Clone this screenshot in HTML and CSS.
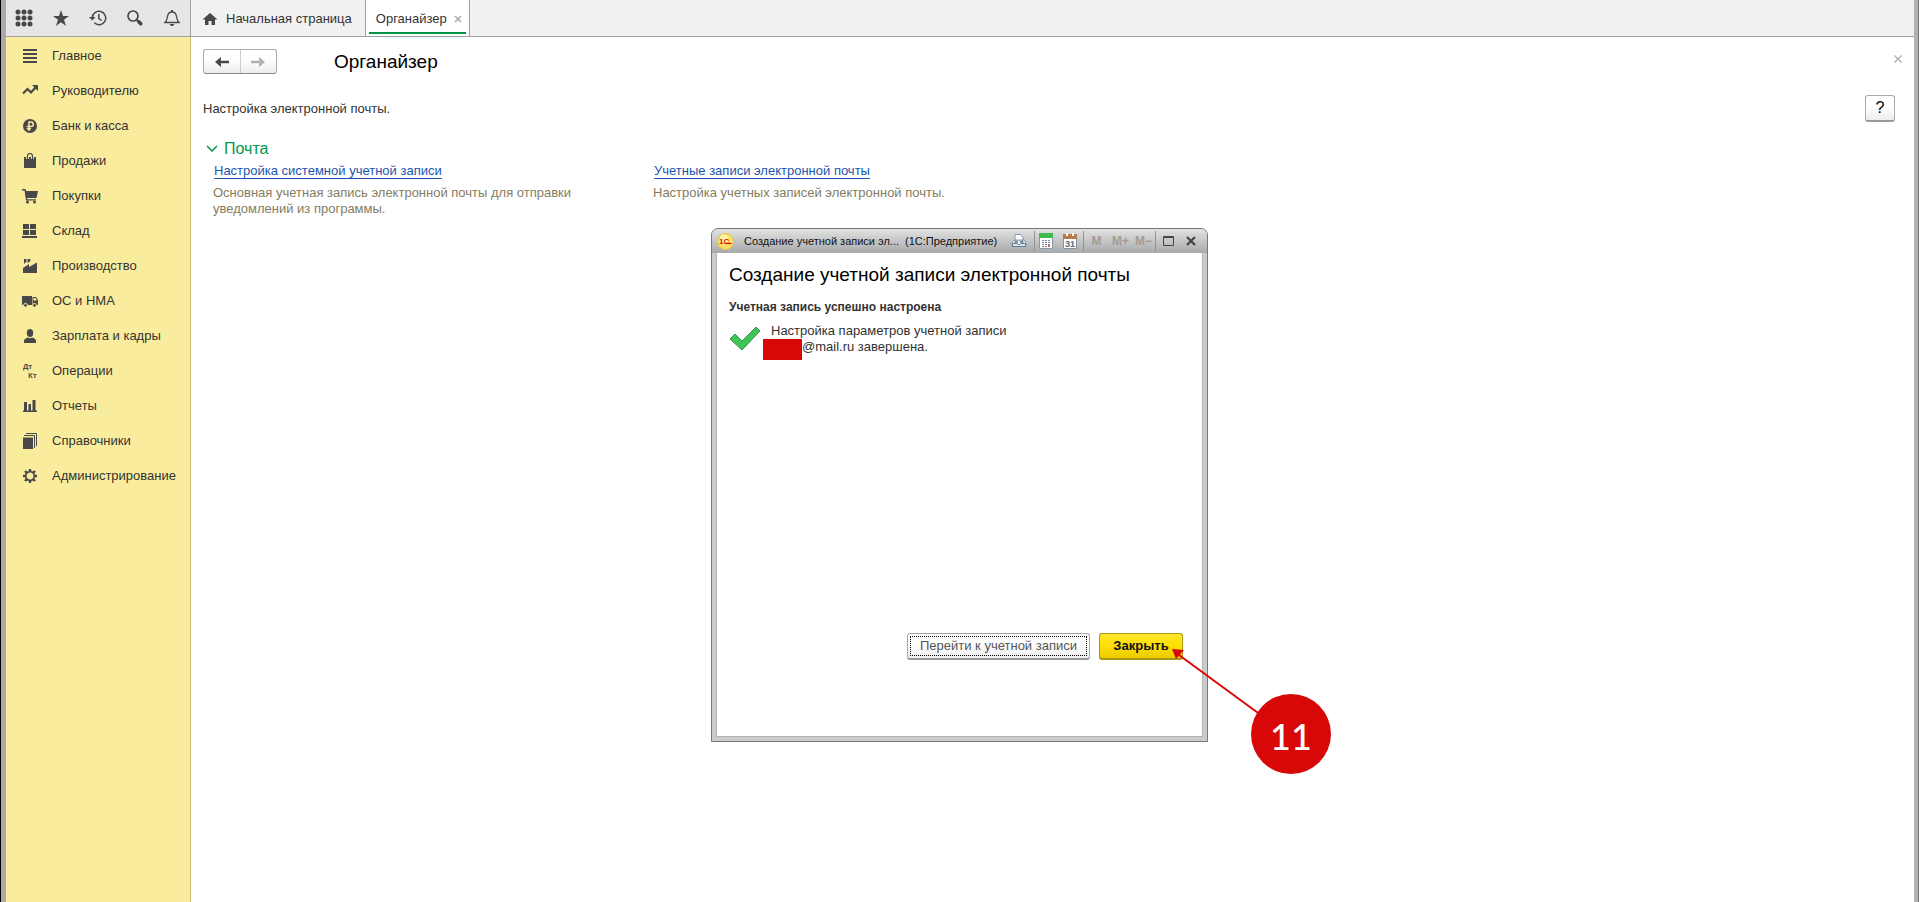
FILE: index.html
```html
<!DOCTYPE html>
<html lang="ru">
<head>
<meta charset="utf-8">
<title>Органайзер</title>
<link rel="stylesheet" href="styles.css">
</head>
<body>
<div class="app">
  <header class="topbar">
    <div class="tools">
      <button class="tool" aria-label="Меню"><svg width="18" height="18" viewBox="0 0 18 18"><g fill="#484848"><circle cx="3" cy="3" r="2.5"/><circle cx="9" cy="3" r="2.5"/><circle cx="15" cy="3" r="2.5"/><circle cx="3" cy="9" r="2.5"/><circle cx="9" cy="9" r="2.5"/><circle cx="15" cy="9" r="2.5"/><circle cx="3" cy="15" r="2.5"/><circle cx="9" cy="15" r="2.5"/><circle cx="15" cy="15" r="2.5"/></g></svg></button>
      <button class="tool" aria-label="Избранное"><svg width="18" height="18" viewBox="0 0 18 18"><path fill="#484848" d="M9 1l2 6h6l-5 3.800 2 6.200-5-3.800-5 3.800 2-6.200-5-3.800h6z"/></svg></button>
      <button class="tool" aria-label="История"><svg width="18" height="18" viewBox="0 0 18 18"><path fill="none" stroke="#484848" stroke-width="1.500" d="M3.300 9a6.700 6.700 0 1 1 2 4.800M9.800 5v4.500l3 2"/><path fill="#484848" d="M0 8h6.500L3.300 11.500z"/></svg></button>
      <button class="tool" aria-label="Поиск"><svg width="18" height="18" viewBox="0 0 18 18"><circle cx="7" cy="7" r="5" fill="none" stroke="#484848" stroke-width="1.700"/><path d="M10.500 10.500l2 2" stroke="#484848" stroke-width="2"/><path d="M12.800 12.800l2 2" stroke="#484848" stroke-width="3.600" stroke-linecap="round"/></svg></button>
      <button class="tool" aria-label="Уведомления"><svg width="18" height="18" viewBox="0 0 18 18"><path fill="none" stroke="#484848" stroke-width="1.300" d="M2 13.500h14c-2.500-2.500-2-4.500-2.700-7C12.700 4 11 3 9 3S5.300 4 4.700 6.500C4 9 4.500 11 2 13.500z"/><path fill="#484848" d="M8 1h2v2H8zM6.500 15h5L10 17H8z"/></svg></button>
    </div>
    <nav class="tabs">
      <a class="tab" href="#home"><svg width="16" height="14" viewBox="0 0 16 14"><path fill="#484848" d="M8 1l7.500 6.500H13V13H9.500V9h-3v4H3V7.500H.5z"/></svg><span>Начальная страница</span></a>
      <div class="tab tab-active"><a href="#organizer">Органайзер</a><button class="tab-close" aria-label="Закрыть вкладку"><svg width="8" height="8" viewBox="0 0 8 8"><path d="M1 1l6 6M7 1L1 7" stroke="#aaa" stroke-width="1.500"/></svg></button></div>
    </nav>
  </header>
  <nav class="sidebar">
    <a href="#"><svg viewBox="0 0 16 16"><path d="M1 2h14M1 6h14M1 10h14M1 14h14" stroke="#484848" stroke-width="2"/></svg>Главное</a>
    <a href="#"><svg viewBox="0 0 16 16"><path fill="none" stroke="#484848" stroke-width="2.200" d="M1 10.500l4.500-4.500L9 9.500l4.500-5"/><path fill="#484848" d="M10 2h6v6z"/></svg>Руководителю</a>
    <a href="#"><svg viewBox="0 0 16 16"><circle cx="8" cy="8" r="7" fill="#484848"/><path fill="none" stroke="#faec9d" stroke-width="1.500" d="M7 13V4h2a2.200 2.200 0 0 1 0 4.600H4.700M4.700 10.700H9"/></svg>Банк и касса</a>
    <a href="#"><svg viewBox="0 0 16 16"><path fill="#484848" d="M2 4h12v11H2z"/><path fill="none" stroke="#faec9d" stroke-width="3" d="M5.500 6V3.500a2.500 2.500 0 0 1 5 0V6"/><path fill="none" stroke="#484848" stroke-width="1.200" d="M5.500 6V3a2.500 2.500 0 0 1 5 0v3"/></svg>Продажи</a>
    <a href="#"><svg viewBox="0 0 16 16"><path fill="#484848" d="M0 1h3.500l.7 2H16l-1.500 7H5l.3 1.300H14V12.500H4L2.500 2.500H0z"/><circle cx="5.500" cy="14" r="1.500" fill="#484848"/><circle cx="12.500" cy="14" r="1.500" fill="#484848"/></svg>Покупки</a>
    <a href="#"><svg viewBox="0 0 16 16"><path fill="#484848" d="M1 1h6v5H1zM8 1h6v5H8zM1 7h6v5H1zM8 7h6v5H8zM0 13h15v2H0z"/></svg>Склад</a>
    <a href="#"><svg viewBox="0 0 16 16"><path fill="#484848" d="M1 15V10l6-4v3l8-4.500V15zM2 1h2.500v2.500L2 6zM5.500 1H8.500L8 3.500 5.500 5z"/></svg>Производство</a>
    <a href="#"><svg viewBox="0 0 16 16"><path fill="#484848" d="M0 3h10v9H0zM10.500 4H14l2 3v5h-5.500z"/><path fill="#faec9d" d="M11.500 5h2l1.500 2.500h-3.500z"/><g fill="#484848" stroke="#faec9d"><circle cx="3.500" cy="12.300" r="1.900"/><circle cx="12.500" cy="12.300" r="1.900"/></g></svg>ОС и НМА</a>
    <a href="#"><svg viewBox="0 0 16 16"><ellipse cx="8" cy="5" rx="3.200" ry="4" fill="#484848"/><path fill="#484848" d="M2 15v-2c0-2 2-3 4-3.500 1 1 3 1 4 0 2 .5 4 1.500 4 3.500v2z"/></svg>Зарплата и кадры</a>
    <a href="#"><svg viewBox="0 0 16 16" class="dtkt"><text x="1" y="6">Дт</text><text x="6" y="15">Кт</text></svg>Операции</a>
    <a href="#"><svg viewBox="0 0 16 16"><path fill="#484848" d="M2 4h3v9H2zM6.500 6h2.500v7H6.500zM10.500 2h3v11h-3zM1 12.500h14V14H1z"/></svg>Отчеты</a>
    <a href="#"><svg viewBox="0 0 16 16"><path fill="#484848" d="M1 4.500h10V16H1z"/><path fill="none" stroke="#484848" stroke-width="1" d="M2 2.500h10.500V15M4 .5h10.500V13"/></svg>Справочники</a>
    <a href="#"><svg viewBox="0 0 16 16"><circle cx="8" cy="8" r="4.300" fill="none" stroke="#484848" stroke-width="1.700"/><path stroke="#484848" stroke-width="2.400" d="M8 1v3M8 12v3M1 8h3M12 8h3M3 3l2.200 2.200M10.800 10.800L13 13M13 3l-2.200 2.200M5.200 10.800L3 13"/></svg>Администрирование</a>
  </nav>
  <main class="page">
    <div class="page-head">
      <div class="history">
        <button aria-label="Назад"><svg width="14" height="10" viewBox="0 0 14 10"><path d="M4 5h10" stroke="#484848" stroke-width="2.500"/><path d="M0 5l6-5v3L5 5l1 2v3z" fill="#484848"/></svg></button>
        <button aria-label="Вперед"><svg width="14" height="10" viewBox="0 0 14 10"><path d="M0 5h10" stroke="#b0b0b0" stroke-width="2.500"/><path d="M14 5L8 0v3l1 2-1 2v3z" fill="#b0b0b0"/></svg></button>
      </div>
      <h1>Органайзер</h1>
      <button class="page-close" aria-label="Закрыть"><svg width="8" height="8" viewBox="0 0 8 8"><path d="M.5 .5l7 7M7.500 .5l-7 7" stroke="#aaa" stroke-width="1.200"/></svg></button>
    </div>
    <div class="intro"><p>Настройка электронной почты.</p><button class="help">?</button></div>
    <section>
      <h2><svg width="12" height="8" viewBox="0 0 12 8"><path d="M1 1l5 5 5-5" fill="none" stroke="#009646" stroke-width="1.500"/></svg>Почта</h2>
      <div class="cards">
        <div class="card"><a href="#system">Настройка системной учетной записи</a><p>Основная учетная запись электронной почты для отправки уведомлений из программы.</p></div>
        <div class="card"><a href="#accounts">Учетные записи электронной почты</a><p>Настройка учетных записей электронной почты.</p></div>
      </div>
    </section>
  </main>
</div>
<div class="dialog" role="dialog" aria-labelledby="dlg-title">
  <div class="titlebar">
    <svg class="logo" width="17" height="17" viewBox="0 0 17 17"><circle cx="8.500" cy="8.500" r="8" fill="#fbe267" stroke="#e5c24c"/><circle cx="7" cy="5.500" r="4" fill="#fff3a0"/><text x="2" y="11">1С</text><path d="M8 10.500h6.500" stroke="#d91010" stroke-width="1.200"/></svg>
    <span class="wtitle">Создание учетной записи эл...</span><span class="wapp">(1С:Предприятие)</span>
    <div class="wtools">
      <button class="print" aria-label="Печать"><svg width="16" height="16" viewBox="0 0 16 16"><path fill="#fff" stroke="#8299ab" d="M4 8V1.500h5.500L12 4v4M1 13.500h14V10l-2-3H3l-2 3z"/><path fill="#dce7ef" stroke="#667c91" d="M1.500 10.500H6l1 1h2l1-1h4.500v3h-13zM4 8.500h2.500v1.500H4zM9.500 8.500H12v1.500H9.500z"/></svg></button>
      <button class="line" aria-label="Калькулятор"><svg width="14" height="16" viewBox="0 0 14 16"><path fill="#fff" stroke="#8a9aa5" d="M.5 .5h13v15H.5z"/><path fill="#42b94b" d="M0 0h14v5H0z"/><path stroke="#7b8791" stroke-dasharray="2 1" d="M3 7.500h9M3 9.500h9M3 11.500h9M3 13.500h9"/><path stroke="#d86a55" stroke-width="2" d="M9 13h2"/></svg></button>
      <button class="mid" aria-label="Календарь"><svg width="14" height="16" viewBox="0 0 14 16"><path fill="#fff" stroke="#7f95a8" d="M.5 2.500h13v13H.5z"/><path fill="#b97b4e" d="M0 1h14v5H0z"/><path fill="#fff" d="M3 0h2v3H3zM9 0h2v3H9z"/><text class="day" x="2" y="14">31</text></svg></button>
      <button class="mem line mid">M</button><button class="mem">M+</button><button class="mem">M−</button>
      <button class="line mid" aria-label="Развернуть"><svg width="11" height="10" viewBox="0 0 11 10"><path fill="none" stroke="#444" d="M.5 .5h10v9H.5zM0 1.500h11"/></svg></button>
      <button class="wclose" aria-label="Закрыть окно"><svg width="10" height="10" viewBox="0 0 10 10"><path d="M1 1l8 8M9 1L1 9" stroke="#444" stroke-width="2.200"/></svg></button>
    </div>
  </div>
  <div class="dbody">
    <h2 id="dlg-title">Создание учетной записи электронной почты</h2>
    <p class="status">Учетная запись успешно настроена</p>
    <div class="result">
      <svg width="32" height="26" viewBox="0 0 32 26"><path d="M1 13l5-5 7 7L27 1l4 4-18 19z" fill="#3fc456" stroke="#3c8f48"/></svg>
      <p><span class="first">Настройка параметров учетной записи</span><span class="second"><span class="redact"></span>@mail.ru завершена.</span></p>
    </div>
    <div class="actions"><button class="goto"><span>Перейти к учетной записи</span></button><button class="primary">Закрыть</button></div>
  </div>
  <svg class="arrow" width="100" height="80" viewBox="0 0 100 80"><path d="M7 6l90 66" stroke="#d90808" stroke-width="2"/><path d="M0 0l12 1-8 9z" fill="#d90808"/></svg>
  <div class="callout">11</div>
</div>
</body>
</html>
```

FILE: styles.css
```css
* { box-sizing: border-box; }
body { margin: 0; font: 13px/16px "Liberation Sans", Arial, sans-serif; color: #333; }
h1, h2, p { margin: 0; font-weight: normal; }
button { margin: 0; padding: 0; border: 0; background: none; font: inherit; color: inherit; display: flex; align-items: center; justify-content: center; }
a { color: inherit; text-decoration: none; }
svg { flex: none; }

.app { min-height: 100vh; display: grid; grid-template: 37px 1fr / 185px 1fr; border-left: 6px solid #aca8aa; border-right: 5px solid #b2b2b2; background: #fff; }
.app::before { content: ""; position: fixed; left: 0; top: 0; bottom: 0; width: 1px; background: #000; }
.app::after { content: ""; position: fixed; right: 0; top: 0; bottom: 0; width: 1px; background: #777; }
.topbar { grid-column: 1 / 3; display: flex; background: #f1f1f1; border-bottom: 1px solid #a0a0a0; }
.tools { width: 185px; display: flex; background: #e6e6e6; border-right: 1px solid #a0a0a0; }
.tool { flex: 1; }
.tabs { display: flex; }
.tab { display: flex; align-items: center; gap: 8px; padding: 1px 13px 0 11px; }
.tab-active { position: relative; height: 36px; gap: 7px; background: #fff; border: solid #a0a0a0; border-width: 0 1px; padding: 1px 7px 0 10px; }
.tab-active::after { content: ""; position: absolute; left: 3px; right: 3px; bottom: 2px; height: 2px; background: #009646; }

.sidebar { padding-top: 1px; background: #faec9d; border-right: 1px solid #cdbb76; }
.sidebar a { display: flex; align-items: center; gap: 14px; height: 35px; padding-left: 16px; }
.sidebar svg { width: 16px; height: 16px; }
.dtkt text { font: bold 7px "Open Sans", sans-serif; fill: #484848; }

.page { padding: 12px 19px 0 12px; }
.page-head { display: flex; align-items: center; }
.history { display: flex; width: 74px; height: 25px; border: 1px solid #aaa; border-bottom-color: #888; border-radius: 3px; background: linear-gradient(#fff 40%, #ededed); }
.history button { flex: 1; }
.history button + button { border-left: 1px solid #ccc; }
h1 { margin-left: 57px; padding-top: 1px; font-size: 19px; line-height: 24px; color: #000; }
.page-close { margin: 0 -11px 6px auto; padding: 4px; }
.intro { display: flex; justify-content: space-between; align-items: center; margin-top: 21px; }
.help { width: 30px; height: 27px; border: 1px solid #aaa; border-bottom: 2px solid #999; border-radius: 3px; background: linear-gradient(#fff 40%, #eee); font-size: 16px; color: #000; }
section h2 { display: flex; align-items: center; gap: 6px; margin: 16px 0 0 3px; font-size: 16px; line-height: 22px; color: #009646; }
.cards { display: grid; grid-template-columns: 440px 400px; margin: 3px 0 0 10px; }
.card a { margin-left: 1px; color: #1c55ae; border-bottom: 1px solid #1c55ae; }
.card p { width: 370px; margin-top: 6px; color: #857d5f; }

.dialog { position: absolute; left: 711px; top: 228px; width: 497px; border: 1px solid #777; border-radius: 7px 7px 0 0; background: #c9cbcc; padding: 0 4px 4px; }
.titlebar { display: flex; align-items: center; height: 24px; margin: 0 -4px; padding: 0 6px 0 5px; border-radius: 6px 6px 0 0; background: linear-gradient(#e2e2e2, #a8a9aa); font-size: 11px; color: #111; white-space: nowrap; }
.logo text { font: bold 8px "Liberation Sans", sans-serif; fill: #d91010; }
.wtitle { margin-left: 10px; }
.wapp { margin-left: 6px; }
.wtools { display: flex; margin-left: auto; }
.wtools button { width: 23px; height: 20px; }
.wtools .print { width: 30px; }
.wtools .mid { width: 26px; }
.wtools .wclose { width: 20px; }
.wtools .line { border-left: 1px solid #929292; }
.wtools .mem { font-size: 12px; font-weight: bold; color: #a69a92; }
.day { font: bold 9px "Liberation Sans", sans-serif; fill: #566b80; }
.dbody { height: 484px; padding: 11px 19px 76px 12px; display: flex; flex-direction: column; background: #fff; border: 1px solid #b2b5b7; border-top: 0; }
.dbody h2 { font-size: 19px; line-height: 22px; color: #000; }
.status { margin-top: 13px; font-size: 12px; font-weight: bold; }
.result { display: flex; align-items: center; gap: 2px; margin-top: 8px; }
.result p { display: grid; }
.first { padding-left: 8px; }
.second { display: flex; height: 16px; }
.redact { width: 39px; height: 21px; background: #d90808; }
.actions { display: flex; justify-content: flex-end; gap: 9px; margin-top: auto; }
.actions button { height: 27px; border: 1px solid #aaa; border-bottom: 2px solid #999; border-radius: 3px; }
.goto { width: 183px; padding: 2px; background: linear-gradient(#fff 40%, #eee); color: #555; }
.goto span { flex: 1; border: 1px dotted #000; line-height: 18px; }
.actions .primary { width: 84px; border-color: #a99716; background: linear-gradient(#ffe72e, #ffdf00 50%, #eccb00); font-weight: bold; color: #111; }
.arrow { position: absolute; left: 460px; top: 420px; }
.callout { position: absolute; left: 539px; top: 465px; width: 80px; height: 80px; border-radius: 50%; background: #d90808; color: #fff; font: 500 36px/84px Lato, sans-serif; text-align: center; }
```
